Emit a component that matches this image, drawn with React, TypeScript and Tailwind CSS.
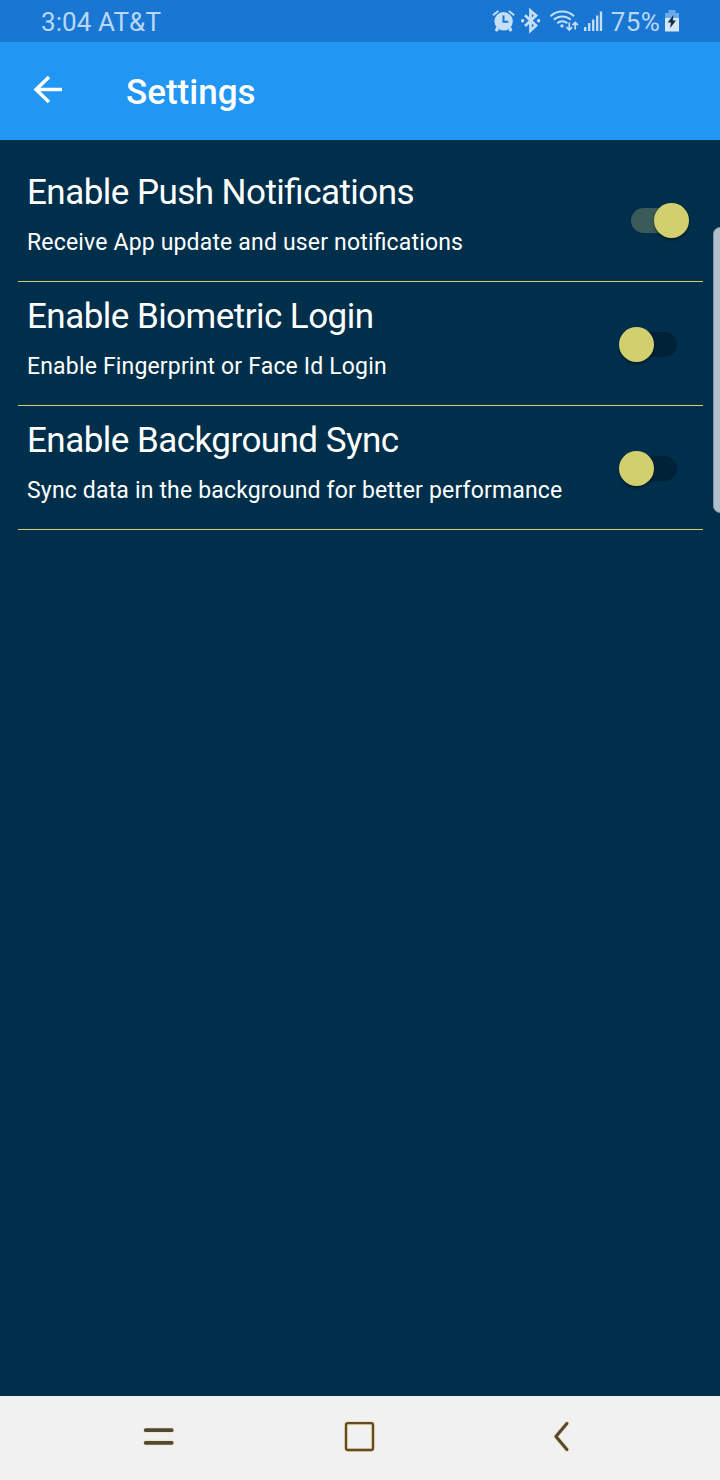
import React from 'react';

type SettingItem = { title: string; detail: string; enabled: boolean };

const settings: SettingItem[] = [
  { title: 'Enable Push Notifications', detail: 'Receive App update and user notifications', enabled: true },
  { title: 'Enable Biometric Login', detail: 'Enable Fingerprint or Face Id Login', enabled: false },
  { title: 'Enable Background Sync', detail: 'Sync data in the background for better performance', enabled: false },
];

function StatusIcons() {
  return (
    <svg className="h-[42px] w-[112px]" viewBox="492 0 112 42" fill="none">
      <g fill="#c5dff7">
        <circle cx="503.6" cy="21.3" r="9.2" />
        <path d="M496.3 26.5l2.7 3.2-2 2-2.2-1.2zM510.9 26.5l-2.7 3.2 2 2 2.2-1.2z" />
      </g>
      <g stroke="#c5dff7" strokeWidth="2">
        <path d="M493 15.3l5.3-4.3M514.2 15.3l-5.3-4.3" />
      </g>
      <path d="M503.5 15.5v6.2h4.8" stroke="#1976d2" strokeWidth="2" />
      <path d="M525 15.2l11 10.4-5.5 5V10.8l5.5 4.8-11 10.4" stroke="#c5dff7" strokeWidth="2.8" />
      <g fill="#c5dff7">
        <circle cx="522.6" cy="20.8" r="1.7" />
        <circle cx="538.6" cy="20.8" r="1.7" />
      </g>
      <g stroke="#c5dff7" strokeWidth="2">
        <path d="M550.5 16.2c6.5-6.3 17-6.3 23.5 0" />
        <path d="M553.8 19.8c4.7-4.5 12.3-4.5 17 0" />
        <path d="M557.3 23.2c2.8-2.7 7.2-2.7 10 0" />
      </g>
      <circle cx="562" cy="25.9" r="1.7" fill="#c5dff7" />
      <path d="M569.3 22.5v7.3M566.5 27.2l2.8 2.8 2.8-2.8M575.2 29.5v-7M572.5 25.2l2.7-2.8 2.7 2.8" stroke="#c5dff7" strokeWidth="1.7" />
      <path d="M585.2 31v-4M589.2 31v-8M593.2 31V19.5M597.2 31V15.5M601 31V11.5" stroke="#c5dff7" strokeWidth="2.3" />
    </svg>
  );
}

function Battery() {
  return (
    <svg className="ml-[4px] h-[42px] w-[16px]" viewBox="664 0 16 42" fill="none">
      <path d="M665 18v-5h3.5v-3h7v3h3.5v5z" fill="#6caaea" />
      <path d="M665 18h14v13.5h-14z" fill="#d3e6f9" />
      <path d="M673.5 15l-5.8 7.6h3.3l-1 5.7 6-7.9h-3.2z" fill="#14293d" />
    </svg>
  );
}

function Toggle({ enabled }: { enabled: boolean }) {
  return (
    <div className={`relative mt-px flex h-[35px] w-[70px] ${enabled ? 'justify-end' : 'justify-start'}`}>
      <div
        className={`absolute left-[12px] top-[5px] h-[25px] w-[46px] rounded-full ${enabled ? 'bg-[#3b5b58]' : 'bg-[#002238]'}`}
      />
      <div className="relative size-[35px] rounded-full bg-[#d2cf6e] shadow-[0_2px_3px_rgba(0,0,0,0.4)]" />
    </div>
  );
}

export default function App() {
  return (
    <div className="relative flex h-[1480px] w-[720px] flex-col overflow-hidden bg-[#002f4c] font-['Roboto',sans-serif]">
      <header>
        <div className="flex h-[42px] items-center bg-[#1976d2] pl-[41px] text-[26px] leading-[42px] text-[#b9d8f5]">
          <span className="mt-[2px] tracking-[0.1px]">3:04 AT&amp;T</span>
          <div className="ml-auto flex items-center pr-[40px]">
            <StatusIcons />
            <span className="ml-[7px] mt-[2px] tracking-[0.3px]">75%</span>
            <Battery />
          </div>
        </div>
        <div className="flex h-[98px] items-center bg-[#2196f3] pl-[33px] text-white">
          <svg className="mb-[4px] h-[30px] w-[30px]" viewBox="0 0 30 30" fill="none" stroke="currentColor" strokeWidth="3.5">
            <path d="M29 15.5H3.5M16 3L3 15.5l13 12.5" />
          </svg>
          <h1 className="ml-[63px] mt-[2px] text-[35px] font-medium leading-[41px]">Settings</h1>
        </div>
      </header>
      <main className="flex-1 pl-[18px] pr-[17px] pt-[18px]">
        {settings.map((item) => (
          <div key={item.title} className="flex h-[124px] flex-col">
            <div className="flex flex-1 items-center pl-[9px] pr-[14px]">
              <div className="flex h-full flex-1 flex-col whitespace-nowrap pt-[14px] text-white">
                <div className="text-[35px] leading-[41px] tracking-[-0.54px] [font-feature-settings:'liga']">{item.title}</div>
                <div className="mt-[16px] text-[23px] leading-[27px] tracking-[0.17px] [font-feature-settings:'liga']">{item.detail}</div>
              </div>
              <Toggle enabled={item.enabled} />
            </div>
            <div className="h-px bg-[#d2cf6e]" />
          </div>
        ))}
      </main>
      <div className="absolute left-[713px] top-[227px] h-[286px] w-[14px] rounded-[9px] border border-[#8196a5] bg-[#b0bfca]" />
      <nav className="h-[84px] bg-[#f1f1f1]">
        <svg className="h-[84px] w-[720px]" viewBox="0 1396 720 84" fill="none" strokeLinecap="round" strokeLinejoin="round">
          <g stroke="#f5dfae" strokeWidth="5">
            <path d="M145.7 1430.2h26M145.7 1442.8h26M566.9 1423.5l-11 13 11 13" />
            <rect x="346" y="1423.2" width="27" height="26.8" rx="2" strokeWidth="4.2" />
          </g>
          <g stroke="#50493a" strokeWidth="3.7">
            <path d="M145.7 1430.2h26M145.7 1442.8h26" />
          </g>
          <path d="M566.9 1423.5l-11 13 11 13" stroke="#50493a" strokeWidth="3" />
          <rect x="346" y="1423.2" width="27" height="26.8" rx="2" stroke="#5c4b2c" strokeWidth="2.3" />
        </svg>
      </nav>
    </div>
  );
}
